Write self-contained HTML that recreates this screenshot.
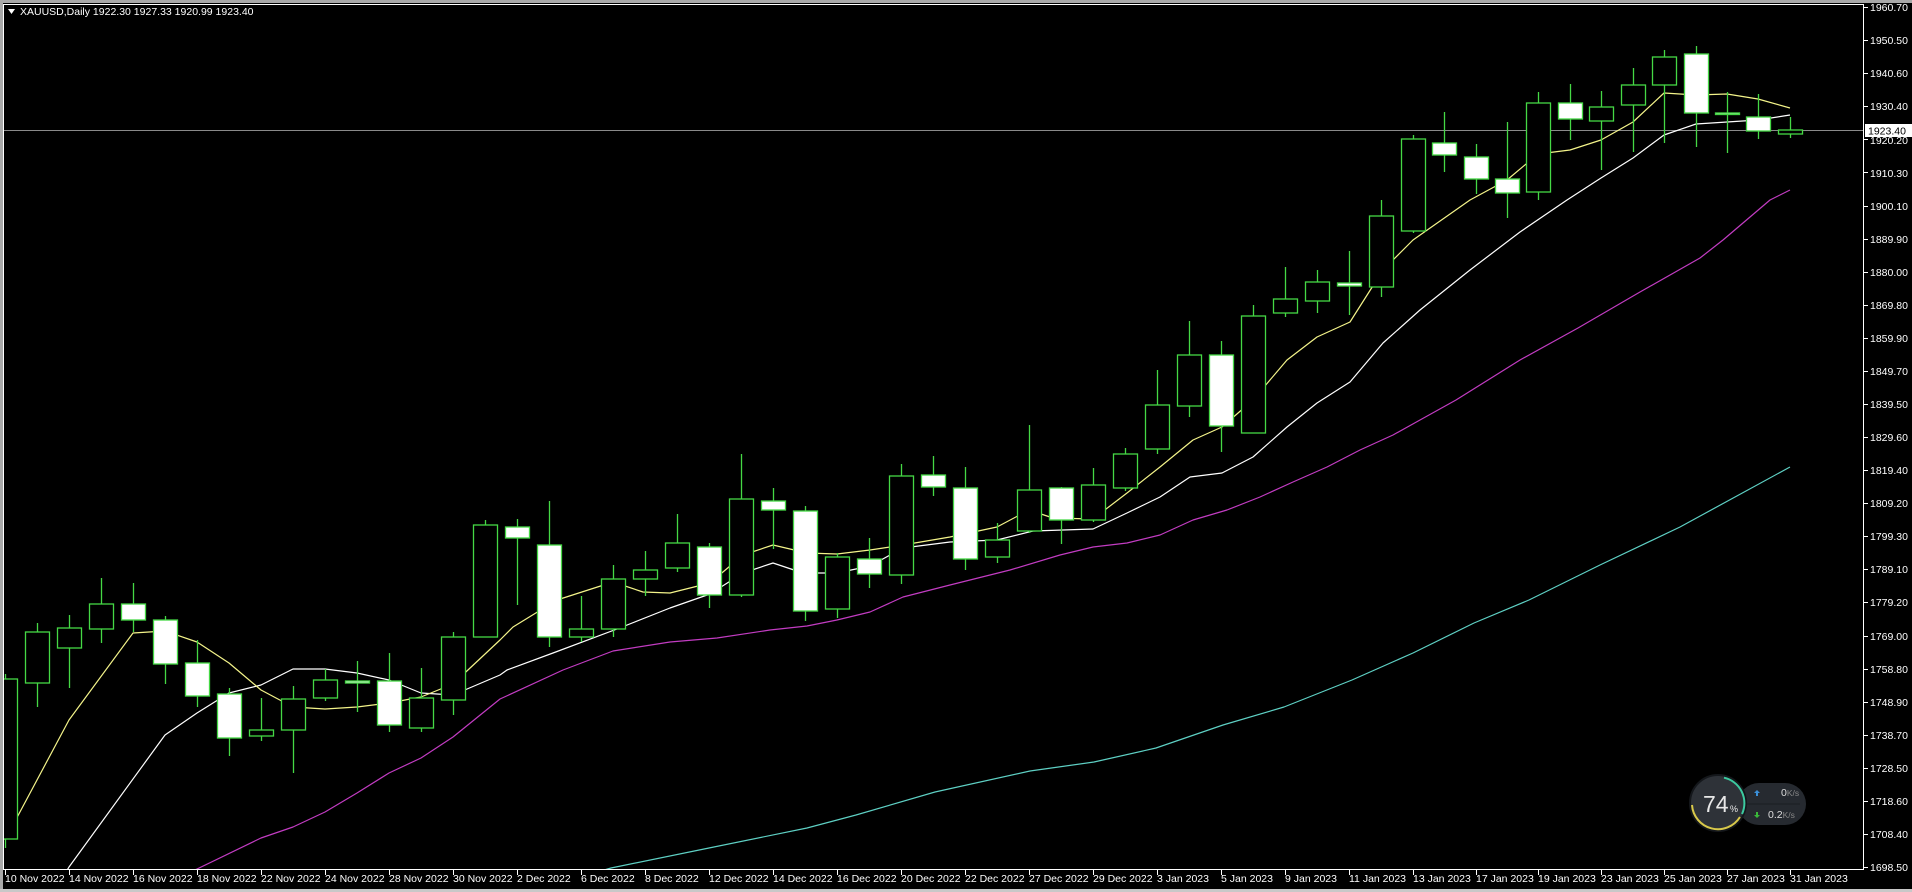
<!DOCTYPE html>
<html><head><meta charset="utf-8"><style>
html,body{margin:0;padding:0;background:#000;width:1912px;height:892px;overflow:hidden}
svg{display:block}
text{font-family:"Liberation Sans",sans-serif;}
</style></head><body>
<svg width="1912" height="892" viewBox="0 0 1912 892" xmlns="http://www.w3.org/2000/svg">
<rect x="0" y="0" width="1912" height="892" fill="#000"/>
<rect x="0" y="0" width="1912" height="3" fill="#a8a8a8"/>
<rect x="0" y="0" width="3" height="892" fill="#a8a8a8"/>
<rect x="0" y="889" width="1912" height="3" fill="#c8c8c8"/>
<line x1="3.5" y1="4" x2="3.5" y2="870" stroke="#fff" stroke-width="1"/>
<line x1="3" y1="4.5" x2="1864" y2="4.5" stroke="#fff" stroke-width="1"/>
<line x1="1863.5" y1="4" x2="1863.5" y2="870" stroke="#fff" stroke-width="1"/>
<line x1="3" y1="869.5" x2="1864" y2="869.5" stroke="#fff" stroke-width="1"/>
<defs><clipPath id="c"><rect x="4" y="5" width="1859" height="864"/></clipPath></defs>
<g clip-path="url(#c)">
<line x1="4" y1="130.5" x2="1863" y2="130.5" stroke="#8a8a8a" stroke-width="1"/>
<g fill="none" stroke-width="1.2" stroke-linejoin="round">
<polyline stroke="#5ed0c4" points="590,874 611,868 709,848 807,828 856,815 935,792 1030,771 1094,762 1156,748 1223,725 1284,707 1352,680 1413,653 1474,623 1529,600 1600,565 1680,527 1790,467"/>
<polyline stroke="#c23cc2" points="190,872 197,869 261,838 293,827 325,812 357,793 389,773 421,758 453,737 500,699 563,670 613,651 670,642 717,638 770,630 807,626 837,620 870,612 903,597 950,585 1010,570 1060,555 1093,547 1127,543 1160,535 1193,520 1227,510 1260,497 1293,482 1327,467 1360,450 1393,435 1420,420 1456,400 1520,360 1578,328 1640,292 1700,258 1723,240 1770,200 1790,190"/>
<polyline stroke="#ffffff" points="66,872 69,867 165,735 197,713 229,693 261,685 293,669 325,669 357,673 389,680 421,693 453,695 500,675 507,670 553,653 617,629 670,608 710,594 743,573 773,563 803,573 837,573 870,566 903,548 950,542 997,540 1033,531 1093,529 1127,513 1160,497 1190,477 1222,473 1253,457 1287,427 1317,403 1350,382 1383,343 1420,310 1470,270 1520,232 1567,200 1601,178 1633,158 1664,135 1696,124 1727,122 1758,120 1790,115"/>
<polyline stroke="#f4f48a" points="5,840 69,720 133,633 165,631 197,642 229,663 261,690 293,707 325,709 357,707 389,703 421,697 453,684 500,640 513,627 557,600 613,582 643,592 670,593 710,583 743,555 773,545 807,553 837,554 870,550 903,545 950,537 997,527 1029,510 1053,518 1093,519 1127,493 1160,467 1193,440 1222,427 1253,400 1287,360 1317,337 1350,322 1383,270 1413,240 1470,200 1507,180 1538,154 1570,150 1601,140 1633,122 1664,93 1696,95 1727,94 1758,99 1790,108"/>
</g>
<g stroke="#45d845" stroke-width="1.3">
<path d="M5.5 674V679M5.5 839V848"/><rect x="-6.5" y="679" width="24" height="160" fill="#000"/>
<path d="M37.5 623V632M37.5 683V707"/><rect x="25.5" y="632" width="24" height="51" fill="#000"/>
<path d="M69.5 615V628M69.5 648V688"/><rect x="57.5" y="628" width="24" height="20" fill="#000"/>
<path d="M101.5 578V604M101.5 629V643"/><rect x="89.5" y="604" width="24" height="25" fill="#000"/>
<path d="M133.5 583V604M133.5 620V632"/><rect x="121.5" y="604" width="24" height="16" fill="#fff"/>
<path d="M165.5 616V620M165.5 664V684"/><rect x="153.5" y="620" width="24" height="44" fill="#fff"/>
<path d="M197.5 640V663M197.5 696V707"/><rect x="185.5" y="663" width="24" height="33" fill="#fff"/>
<path d="M229.5 688V694M229.5 738V756"/><rect x="217.5" y="694" width="24" height="44" fill="#fff"/>
<path d="M261.5 698V730M261.5 736V741"/><rect x="249.5" y="730" width="24" height="6" fill="#000"/>
<path d="M293.5 686V699M293.5 730V773"/><rect x="281.5" y="699" width="24" height="31" fill="#000"/>
<path d="M325.5 669V680M325.5 698V701"/><rect x="313.5" y="680" width="24" height="18" fill="#000"/>
<path d="M357.5 661V681M357.5 683V712"/><rect x="345.5" y="681" width="24" height="2" fill="#fff"/>
<path d="M389.5 653V681M389.5 725V732"/><rect x="377.5" y="681" width="24" height="44" fill="#fff"/>
<path d="M421.5 668V698M421.5 728V732"/><rect x="409.5" y="698" width="24" height="30" fill="#000"/>
<path d="M453.5 632V637M453.5 700V715"/><rect x="441.5" y="637" width="24" height="63" fill="#000"/>
<path d="M485.5 520V525"/><rect x="473.5" y="525" width="24" height="112" fill="#000"/>
<path d="M517.5 519V527M517.5 538V605"/><rect x="505.5" y="527" width="24" height="11" fill="#fff"/>
<path d="M549.5 501V545M549.5 637V647"/><rect x="537.5" y="545" width="24" height="92" fill="#fff"/>
<path d="M581.5 596V629M581.5 637V642"/><rect x="569.5" y="629" width="24" height="8" fill="#000"/>
<path d="M613.5 565V579M613.5 629V637"/><rect x="601.5" y="579" width="24" height="50" fill="#000"/>
<path d="M645.5 551V570M645.5 579V596"/><rect x="633.5" y="570" width="24" height="9" fill="#000"/>
<path d="M677.5 514V543M677.5 568V572"/><rect x="665.5" y="543" width="24" height="25" fill="#000"/>
<path d="M709.5 543V547M709.5 595V608"/><rect x="697.5" y="547" width="24" height="48" fill="#fff"/>
<path d="M741.5 454V499M741.5 595V597"/><rect x="729.5" y="499" width="24" height="96" fill="#000"/>
<path d="M773.5 488V501M773.5 510V549"/><rect x="761.5" y="501" width="24" height="9" fill="#fff"/>
<path d="M805.5 506V511M805.5 611V621"/><rect x="793.5" y="511" width="24" height="100" fill="#fff"/>
<path d="M837.5 553V557M837.5 609V618"/><rect x="825.5" y="557" width="24" height="52" fill="#000"/>
<path d="M869.5 538V559M869.5 574V588"/><rect x="857.5" y="559" width="24" height="15" fill="#fff"/>
<path d="M901.5 464V476M901.5 575V584"/><rect x="889.5" y="476" width="24" height="99" fill="#000"/>
<path d="M933.5 456V475M933.5 487V496"/><rect x="921.5" y="475" width="24" height="12" fill="#fff"/>
<path d="M965.5 467V488M965.5 559V570"/><rect x="953.5" y="488" width="24" height="71" fill="#fff"/>
<path d="M997.5 523V540M997.5 557V563"/><rect x="985.5" y="540" width="24" height="17" fill="#000"/>
<path d="M1029.5 425V490M1029.5 531V533"/><rect x="1017.5" y="490" width="24" height="41" fill="#000"/>
<path d="M1061.5 487V488M1061.5 520V544"/><rect x="1049.5" y="488" width="24" height="32" fill="#fff"/>
<path d="M1093.5 468V485M1093.5 520V522"/><rect x="1081.5" y="485" width="24" height="35" fill="#000"/>
<path d="M1125.5 448V454M1125.5 488V491"/><rect x="1113.5" y="454" width="24" height="34" fill="#000"/>
<path d="M1157.5 370V405M1157.5 449V454"/><rect x="1145.5" y="405" width="24" height="44" fill="#000"/>
<path d="M1189.5 321V355M1189.5 406V417"/><rect x="1177.5" y="355" width="24" height="51" fill="#000"/>
<path d="M1221.5 341V355M1221.5 426V452"/><rect x="1209.5" y="355" width="24" height="71" fill="#fff"/>
<path d="M1253.5 305V316"/><rect x="1241.5" y="316" width="24" height="117" fill="#000"/>
<path d="M1285.5 267V299M1285.5 313V317"/><rect x="1273.5" y="299" width="24" height="14" fill="#000"/>
<path d="M1317.5 270V282M1317.5 301V313"/><rect x="1305.5" y="282" width="24" height="19" fill="#000"/>
<path d="M1349.5 251V283M1349.5 286V315"/><rect x="1337.5" y="283" width="24" height="3" fill="#fff"/>
<path d="M1381.5 200V216M1381.5 287V297"/><rect x="1369.5" y="216" width="24" height="71" fill="#000"/>
<path d="M1413.5 135V139M1413.5 231V233"/><rect x="1401.5" y="139" width="24" height="92" fill="#000"/>
<path d="M1444.5 112V143M1444.5 155V172"/><rect x="1432.5" y="143" width="24" height="12" fill="#fff"/>
<path d="M1476.5 144V157M1476.5 179V194"/><rect x="1464.5" y="157" width="24" height="22" fill="#fff"/>
<path d="M1507.5 122V179M1507.5 193V218"/><rect x="1495.5" y="179" width="24" height="14" fill="#fff"/>
<path d="M1538.5 92V103M1538.5 192V200"/><rect x="1526.5" y="103" width="24" height="89" fill="#000"/>
<path d="M1570.5 84V103M1570.5 119V140"/><rect x="1558.5" y="103" width="24" height="16" fill="#fff"/>
<path d="M1601.5 91V107M1601.5 121V170"/><rect x="1589.5" y="107" width="24" height="14" fill="#000"/>
<path d="M1633.5 68V85M1633.5 105V152"/><rect x="1621.5" y="85" width="24" height="20" fill="#000"/>
<path d="M1664.5 50V57M1664.5 85V143"/><rect x="1652.5" y="57" width="24" height="28" fill="#000"/>
<path d="M1696.5 46V54M1696.5 113V147"/><rect x="1684.5" y="54" width="24" height="59" fill="#fff"/>
<path d="M1727.5 92V113M1727.5 114V153"/><rect x="1715.5" y="113" width="24" height="1.5" fill="#fff"/>
<path d="M1758.5 94V117M1758.5 131V139"/><rect x="1746.5" y="117" width="24" height="14" fill="#fff"/>
<path d="M1790.5 117V130M1790.5 134V138"/><rect x="1778.5" y="130" width="24" height="4" fill="#000"/>
</g>
</g>
<!-- title -->
<path d="M8 9h7l-3.5 5z" fill="#fff"/>
<text x="20" y="15" font-size="10.5" fill="#fff">XAUUSD,Daily  1922.30 1927.33 1920.99 1923.40</text>
<!-- price axis -->
<g fill="#fff" font-size="10.5">
<text x="1870" y="11">1960.70</text>
<text x="1870" y="44">1950.50</text>
<text x="1870" y="77">1940.60</text>
<text x="1870" y="110">1930.40</text>
<text x="1870" y="144">1920.20</text>
<text x="1870" y="177">1910.30</text>
<text x="1870" y="210">1900.10</text>
<text x="1870" y="243">1889.90</text>
<text x="1870" y="276">1880.00</text>
<text x="1870" y="309">1869.80</text>
<text x="1870" y="342">1859.90</text>
<text x="1870" y="375">1849.70</text>
<text x="1870" y="408">1839.50</text>
<text x="1870" y="441">1829.60</text>
<text x="1870" y="474">1819.40</text>
<text x="1870" y="507">1809.20</text>
<text x="1870" y="540">1799.30</text>
<text x="1870" y="573">1789.10</text>
<text x="1870" y="606">1779.20</text>
<text x="1870" y="640">1769.00</text>
<text x="1870" y="673">1758.80</text>
<text x="1870" y="706">1748.90</text>
<text x="1870" y="739">1738.70</text>
<text x="1870" y="772">1728.50</text>
<text x="1870" y="805">1718.60</text>
<text x="1870" y="838">1708.40</text>
<text x="1870" y="871">1698.50</text>
</g>
<g stroke="#fff" stroke-width="1">
<path d="M1864 7.5h4M1864 40.5h4M1864 73.5h4M1864 106.5h4M1864 139.5h4M1864 172.5h4M1864 206.5h4M1864 239.5h4M1864 272.5h4M1864 305.5h4M1864 338.5h4M1864 371.5h4M1864 404.5h4M1864 437.5h4M1864 470.5h4M1864 503.5h4M1864 536.5h4M1864 569.5h4M1864 602.5h4M1864 636.5h4M1864 669.5h4M1864 702.5h4M1864 735.5h4M1864 768.5h4M1864 801.5h4M1864 834.5h4M1864 867.5h4"/>
</g>
<rect x="1865" y="124" width="47" height="13" fill="#fff"/>
<text x="1868" y="134.5" font-size="10.5" fill="#000">1923.40</text>
<!-- date axis -->
<g stroke="#fff" stroke-width="1">
<path d="M5.5 870v5M69.5 870v5M133.5 870v5M197.5 870v5M261.5 870v5M325.5 870v5M389.5 870v5M453.5 870v5M517.5 870v5M581.5 870v5M645.5 870v5M709.5 870v5M773.5 870v5M837.5 870v5M901.5 870v5M965.5 870v5M1029.5 870v5M1093.5 870v5M1157.5 870v5M1221.5 870v5M1285.5 870v5M1349.5 870v5M1413.5 870v5M1476.5 870v5M1538.5 870v5M1601.5 870v5M1664.5 870v5M1727.5 870v5M1790.5 870v5"/>
</g>
<g fill="#fff" font-size="10.5">
<text x="5" y="882">10 Nov 2022</text>
<text x="69" y="882">14 Nov 2022</text>
<text x="133" y="882">16 Nov 2022</text>
<text x="197" y="882">18 Nov 2022</text>
<text x="261" y="882">22 Nov 2022</text>
<text x="325" y="882">24 Nov 2022</text>
<text x="389" y="882">28 Nov 2022</text>
<text x="453" y="882">30 Nov 2022</text>
<text x="517" y="882">2 Dec 2022</text>
<text x="581" y="882">6 Dec 2022</text>
<text x="645" y="882">8 Dec 2022</text>
<text x="709" y="882">12 Dec 2022</text>
<text x="773" y="882">14 Dec 2022</text>
<text x="837" y="882">16 Dec 2022</text>
<text x="901" y="882">20 Dec 2022</text>
<text x="965" y="882">22 Dec 2022</text>
<text x="1029" y="882">27 Dec 2022</text>
<text x="1093" y="882">29 Dec 2022</text>
<text x="1157" y="882">3 Jan 2023</text>
<text x="1221" y="882">5 Jan 2023</text>
<text x="1285" y="882">9 Jan 2023</text>
<text x="1349" y="882">11 Jan 2023</text>
<text x="1413" y="882">13 Jan 2023</text>
<text x="1476" y="882">17 Jan 2023</text>
<text x="1538" y="882">19 Jan 2023</text>
<text x="1601" y="882">23 Jan 2023</text>
<text x="1664" y="882">25 Jan 2023</text>
<text x="1727" y="882">27 Jan 2023</text>
<text x="1790" y="882">31 Jan 2023</text>
</g>
<!-- widget -->
<rect x="1738" y="783" width="68" height="42" rx="21" fill="#262a30"/>
<line x1="1745" y1="804" x2="1800" y2="804" stroke="#1a1d22" stroke-width="1"/>
<circle cx="1718" cy="803" r="28" fill="#2e3238" stroke="#14171b" stroke-width="2"/>
<path d="M1724 777.7 A26 26 0 0 1 1742 814" fill="none" stroke="#3ccaa0" stroke-width="2"/>
<path d="M1740 817 A26 26 0 0 1 1692 805" fill="none" stroke="#d8c84a" stroke-width="2"/>
<text x="1703" y="812" font-size="23" fill="#e8e8e8">74</text>
<text x="1730" y="812" font-size="9" fill="#e8e8e8">%</text>
<path d="M1757 790l3 3h-2v3h-2v-3h-2z" fill="#3a8fd8"/>
<path d="M1757 818l3 -3h-2v-3h-2v3h-2z" fill="#3ab83a"/>
<text x="1781" y="796" font-size="10.5" fill="#ddd">0<tspan font-size="8.5" fill="#888">K/s</tspan></text>
<text x="1768" y="818" font-size="10.5" fill="#ddd">0.2<tspan font-size="8.5" fill="#888">K/s</tspan></text>
</svg>
</body></html>
